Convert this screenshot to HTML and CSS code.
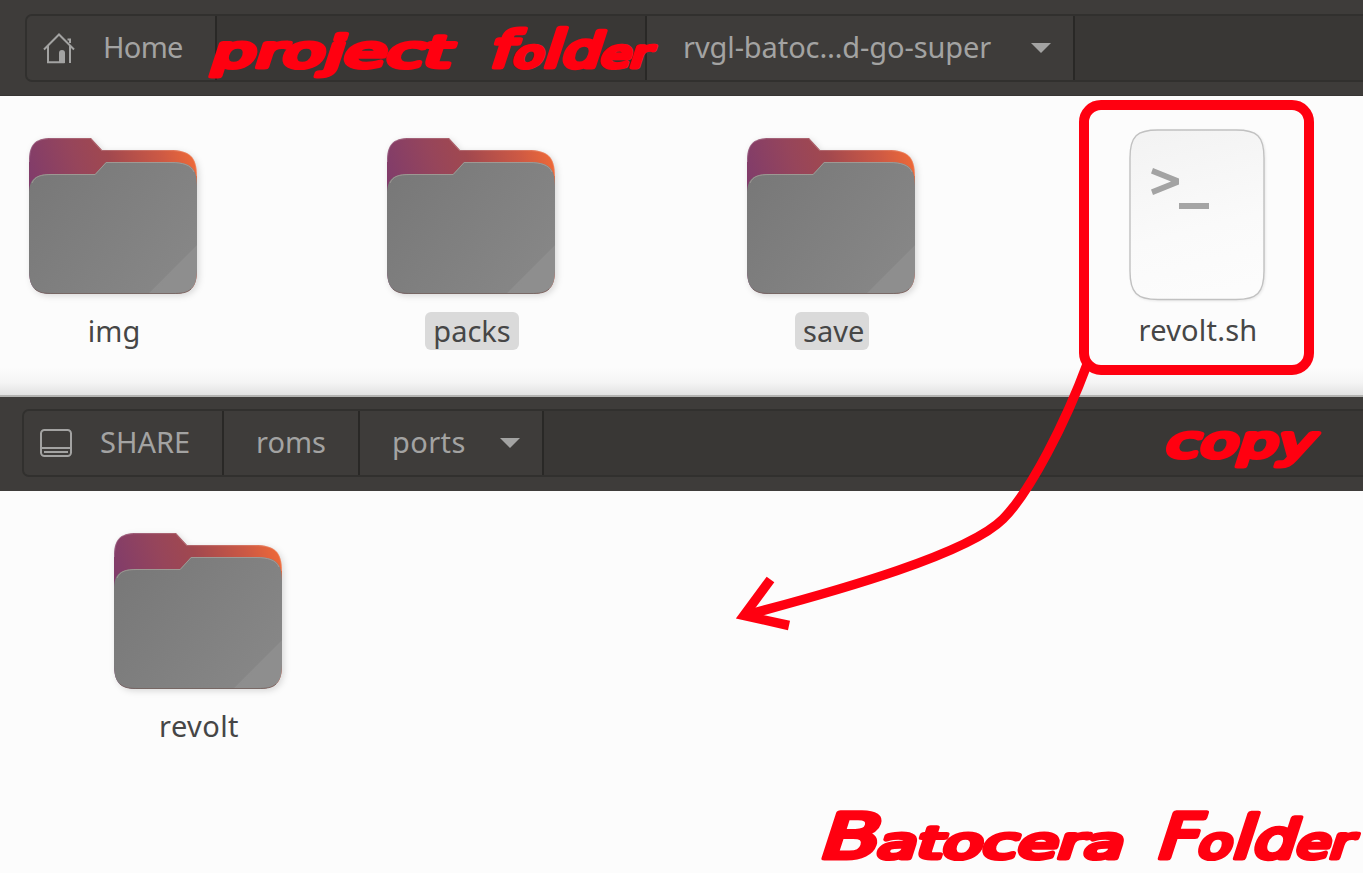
FILE: index.html
```html
<!DOCTYPE html>
<html lang="en">
<head>
<meta charset="utf-8">
<title>Files</title>
<link rel="stylesheet" href="styles.css">
</head>
<body>
<svg class="defs" width="0" height="0" aria-hidden="true">
  <defs>
    <linearGradient id="back" gradientUnits="userSpaceOnUse" x1="5" y1="60" x2="165" y2="10">
      <stop offset="0" stop-color="#803c6b"/><stop offset="0.3" stop-color="#96455b"/><stop offset="0.5" stop-color="#a1484f"/><stop offset="0.8" stop-color="#cd5944"/><stop offset="1" stop-color="#f06a37"/>
    </linearGradient>
    <linearGradient id="front" x1="0" y1="0" x2="1" y2="0.6">
      <stop offset="0" stop-color="#777"/><stop offset="1" stop-color="#868686"/>
    </linearGradient>
    <linearGradient id="paper" x1="0.3" y1="0" x2="0.5" y2="1">
      <stop offset="0" stop-color="#f3f3f3"/><stop offset="0.6" stop-color="#fafafa"/><stop offset="1" stop-color="#fcfcfc"/>
    </linearGradient>
    <symbol id="folder" viewBox="0 0 184 168">
      <path d="M0 24C0 7 5 0 23 0H62L73 12H141C161 12 168 19 168 38V132C168 150 162 156 143 156H25C6 156 0 150 0 131Z" fill="url(#back)"/>
      <path d="M0.5 24C0.5 7 5 .6 23 .6H61.5L72.500 12.600H141C161 12.600 167.500 19 167.500 38" fill="none" stroke="#fff" stroke-opacity=".18"/>
      <path d="M0 57C0 41 6 36 23 36H66L77 24H142C162 24 168 30 168 48V131C168 150 162 156 143 156H25C6 156 0 150 0 131Z" fill="url(#front)"/>
      <path d="M3 45C6 38 12 36.500 23 36.500H66.200L77.200 24.500H142C154 24.500 162 27 165 34" fill="none" stroke="#aaa39c" stroke-opacity=".75"/>
      <path d="M168 107V131C168 150 162 156 143 156H119Z" fill="#fff" fill-opacity=".065"/>
      <path d="M6 151C10 155 16 155.500 25 155.500H143C152 155.500 158 155 162 151" fill="none" stroke="#74605c" stroke-opacity=".8"/>
    </symbol>
  </defs>
</svg>

<main class="screen">
  <section class="pane pane-project">
    <header class="toolbar">
      <nav class="pathbar">
        <div class="crumb crumb-home">
          <svg class="home-icon" viewBox="0 0 32 31" width="32" height="31">
            <path d="M1 16.500L16 1.500L31 16.500M5 13V29.200H21.500M27 13V30M24.500 6.500H27V10" fill="none" stroke="currentColor" stroke-width="2"/>
            <path d="M16 30V20Q16 17 19 17Q22 17 22 20V30Z" fill="currentColor"/>
          </svg>
          <span class="home-text">Home</span>
        </div>
        <div class="crumb crumb-hidden"></div>
        <div class="crumb crumb-current"><span class="current-text">rvgl-batoc…d-go-super</span><i class="caret"></i></div>
      </nav>
    </header>
    <div class="files">
      <div class="item"><svg class="folder"><use href="#folder" width="184" height="168"/></svg><span class="name">img</span></div>
      <div class="item"><svg class="folder"><use href="#folder" width="184" height="168"/></svg><span class="name marked packs">packs</span></div>
      <div class="item"><svg class="folder"><use href="#folder" width="184" height="168"/></svg><span class="name marked save">save</span></div>
      <div class="item item-script">
        <svg class="script" viewBox="0 0 136 174" width="136" height="174">
          <path d="M1 29C1 7 8 1 29 1H107C128 1 135 7 135 29V142C135 164 128 170.500 107 170.500H29C8 170.500 1 164 1 142Z" fill="url(#paper)" stroke="#c1c1c1" stroke-width="1.400"/>
          <path d="M24 39L50 49.500V55.500L24 66L22 60.500L42 52.500L22 44.500Z" fill="#a3a3a3"/>
          <path d="M50 74H80V80H50Z" fill="#a5a5a5"/>
        </svg>
        <span class="name">revolt.sh</span>
      </div>
    </div>
  </section>

  <section class="pane pane-batocera">
    <header class="toolbar">
      <nav class="pathbar">
        <div class="crumb crumb-share">
          <svg class="drive-icon" viewBox="0 0 32 28" width="32" height="28">
            <rect x="1" y="1" width="30" height="26" rx="3.500" fill="none" stroke="currentColor" stroke-width="2"/>
            <path d="M1 19H31M4 23H28" fill="none" stroke="currentColor" stroke-width="2"/>
          </svg>
          <span class="share-text">SHARE</span>
        </div>
        <div class="crumb crumb-roms"><span>roms</span></div>
        <div class="crumb crumb-ports"><span class="ports-text">ports</span><i class="caret"></i></div>
      </nav>
    </header>
    <div class="files">
      <div class="item"><svg class="folder"><use href="#folder" width="184" height="168"/></svg><span class="name revolt">revolt</span></div>
    </div>
  </section>

  <svg class="notes" viewBox="0 0 1363 873" width="1363" height="873">
    <rect x="1084" y="105" width="225" height="265" rx="17" fill="none" stroke="#ff0010" stroke-width="10"/>
    <path d="M1088 362C1065 424 1030 492 1003 519C968 554 840 590 750 614" fill="none" stroke="#ff0010" stroke-width="9.500"/>
    <path d="M770.500 579.500L744 615.500L789 625.500" fill="none" stroke="#ff0010" stroke-width="9.500"/>
    <g class="lettering">
      <text transform="translate(209 67) skewX(-18)" font-size="43" textLength="239" lengthAdjust="spacingAndGlyphs">project</text>
      <text transform="translate(488 67) skewX(-18)" font-size="37" textLength="160" lengthAdjust="spacingAndGlyphs"><tspan font-size="50">f</tspan>o<tspan font-size="51">l</tspan><tspan font-size="47">d</tspan>er</text>
      <text transform="translate(1163 457) skewX(-18)" font-size="43" textLength="149" lengthAdjust="spacingAndGlyphs">copy</text>
      <text transform="translate(817 858) skewX(-18)" font-size="43" textLength="304" lengthAdjust="spacingAndGlyphs"><tspan class="narrow" font-size="62">B</tspan>atocera</text>
      <text transform="translate(1154 858) skewX(-18)" font-size="43" textLength="196" lengthAdjust="spacingAndGlyphs"><tspan class="narrow" font-size="62">F</tspan>o<tspan font-size="59">l</tspan><tspan font-size="53">d</tspan>er</text>
    </g>
  </svg>
</main>
</body>
</html>
```
FILE: styles.css
```css
* { box-sizing: border-box; }
body { margin: 0; background: #fcfcfc; font-family: "Noto Sans", "Open Sans", sans-serif; font-size: 29px; line-height: 38px; color: #464646; }
.defs { position: absolute; }
.screen { position: relative; width: 1363px; height: 873px; overflow: hidden; display: flex; flex-direction: column; }
.pane { display: flex; flex-direction: column; }
.pane-project { height: 397px; }
.pane-batocera { height: 476px; }
.toolbar { background: #3e3c3a; color: #a3a3a2; flex: none; overflow: hidden; }
.pane-project .toolbar { height: 96px; padding: 14px 0 0 25px; border-bottom: 1px solid #373533; }
.pane-batocera .toolbar { height: 94px; padding: 12px 0 0 22px; }
.pathbar { width: 1400px; height: 68px; display: flex; background: #393735; border: 2px solid #31302e; border-radius: 7px; overflow: hidden; }
.crumb { display: flex; align-items: center; flex: none; background: #3e3c3a; border-right: 2px solid #292826; white-space: nowrap; }
.crumb-home { width: 190px; padding-left: 16px; gap: 28px; }
.home-text { letter-spacing: -0.7px; }
.crumb-hidden { width: 430px; background: #393735; }
.crumb-current { width: 428px; padding-left: 36px; }
.current-text { width: 310px; letter-spacing: -0.1px; }
.crumb-current .caret { margin-left: 38px; }
.crumb-share { width: 200px; padding-left: 16px; gap: 28px; }
.crumb-roms { width: 136px; justify-content: center; }
.crumb-ports { width: 184px; padding-left: 32px; justify-content: space-between; padding-right: 22px; }
.ports-text { letter-spacing: 0.4px; }
.crumb span { position: relative; top: -1px; }
.caret { width: 20px; height: 10px; background: #a3a3a2; clip-path: polygon(0 0, 100% 0, 50% 100%); }
.home-icon, .drive-icon { flex: none; }
.files { flex: 1; display: grid; grid-template-columns: 358px 360px 382px 136px; align-items: start; }
.pane-project .files { padding: 42px 0 0 29px; background: linear-gradient(#fcfcfc 272px, #f4f4f4 287px, #e2e2e2 299px); border-bottom: 2px solid #b3b3b1; }
.pane-batocera .files { padding: 42px 0 0 114px; }
.item { width: 168px; display: flex; flex-direction: column; align-items: center; }
.folder { width: 168px; height: 156px; overflow: visible; filter: drop-shadow(2px 2px 3px rgba(0, 0, 0, .14)); }
.name { margin: 18px 0 0 2px; padding: 0 8px; height: 38px; border-radius: 6px; white-space: nowrap; }
.marked { background: #dadada; text-align: center; }
.packs { width: 94px; }
.save { width: 74px; }
.revolt { letter-spacing: 0.4px; }
.item-script { width: 136px; margin-top: -9px; }
.item-script .name { margin-top: 8px; letter-spacing: 0.2px; }
.script { filter: drop-shadow(1px 1px 1px rgba(0, 0, 0, .08)); }
.notes { position: absolute; left: 0; top: 0; }
.lettering { font-family: "DejaVu Sans", sans-serif; font-weight: 400; fill: #ff0010; stroke: #ff0010; stroke-width: 5px; stroke-linejoin: round; }
.narrow { font-family: "DejaVu Sans Condensed", "DejaVu Sans", sans-serif; font-stretch: condensed; }
```
